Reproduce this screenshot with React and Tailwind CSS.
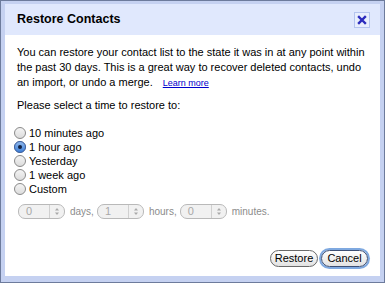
import React from "react";

const options = ["10 minutes ago", "1 hour ago", "Yesterday", "1 week ago", "Custom"];

const Radio = ({ checked }) => (
  <span className="relative inline-block w-[12px] h-[12px] rounded-full border border-[#8a8a8a] bg-gradient-to-b from-[#f4f4f4] to-[#dcdcdc] shrink-0">
    {checked && (
      <span className="absolute inset-[-1px] rounded-full border border-[#3b62a8] bg-gradient-to-b from-[#8fb8ec] to-[#3d7fd6]">
        <span className="absolute left-[3px] top-[3px] w-[4px] h-[4px] rounded-full bg-[#102040]" />
      </span>
    )}
  </span>
);

const Spin = ({ value }) => (
  <span className="inline-flex items-center h-[15px] w-[47px] rounded-[7px] border border-[#b9b9b9] bg-[#f1f1f1] text-[#a8a8a8] text-[11px] leading-none">
    <span className="pl-[7px] w-[30px]">{value}</span>
    <span className="h-full w-px bg-[#d0d0d0]" />
    <svg width="14" height="11" viewBox="0 0 14 11">
      <path d="M5 4.5 L7 2 L9 4.5 Z" fill="#a9a9a9" />
      <path d="M5 6.5 L7 9 L9 6.5 Z" fill="#a9a9a9" />
    </svg>
  </span>
);

export default function App() {
  return (
    <div className="w-[385px] h-[283px] bg-[#c5d1f1] border border-[#6d7b9c] pt-[3px] pl-[4px] pr-[4px] pb-[6px] font-['Liberation_Sans',Arial,sans-serif] text-black">
      <div className="h-full bg-white flex flex-col">
        <div className="h-[31px] bg-[#e0e8fd] flex items-center justify-between pl-[12px] pr-[10px]">
          <span className="text-[12.5px] font-bold">Restore Contacts</span>
          <span className="w-[16px] h-[16px] border border-[#b4c4ef] bg-[#e8eefd] flex items-center justify-center">
            <svg width="10" height="10" viewBox="0 0 10 10">
              <path d="M2 2 L8 8 M8 2 L2 8" stroke="#2b2bbd" strokeWidth="2.4" strokeLinecap="square" />
            </svg>
          </span>
        </div>
        <div className="pl-[12px] pr-[6px] pt-[10px] text-[11px] leading-[15px]">
          <p className="whitespace-nowrap">
            You can restore your contact list to the state it was in at any point within
            <br />
            the past 30 days. This is a great way to recover deleted contacts, undo
            <br />
            an import, or undo a merge.
            <a className="ml-[10px] text-[9px] text-[#0000cc] underline">Learn more</a>
          </p>
          <p className="mt-[7px]">Please select a time to restore to:</p>
          <div className="mt-[13px] flex flex-col">
            {options.map((o, i) => (
              <label key={o} className="flex items-center gap-[3px] h-[14px] ml-[-3px]">
                <Radio checked={i === 1} />
                <span>{o}</span>
              </label>
            ))}
          </div>
          <div className="mt-[8px] pl-[1px] flex items-center text-[10px] text-[#8c8c8c]">
            <Spin value="0" />
            <span className="ml-[5px] mr-[3px]">days,</span>
            <Spin value="1" />
            <span className="ml-[5px] mr-[3px]">hours,</span>
            <Spin value="0" />
            <span className="ml-[5px]">minutes.</span>
          </div>
        </div>
        <div className="mt-auto mb-[9px] pr-[12px] flex justify-end gap-[3px]">
          <button className="h-[17px] w-[48px] rounded-full border border-[#6a6a6a] bg-gradient-to-b from-white to-[#e2e2e2] text-[11px] leading-none">
            Restore
          </button>
          <button className="h-[17px] w-[47px] rounded-full border border-[#3d4f74] bg-gradient-to-b from-white to-[#e2e2e2] text-[11px] leading-none shadow-[0_0_0_2px_#7fa9e0]">
            Cancel
          </button>
        </div>
      </div>
    </div>
  );
}
